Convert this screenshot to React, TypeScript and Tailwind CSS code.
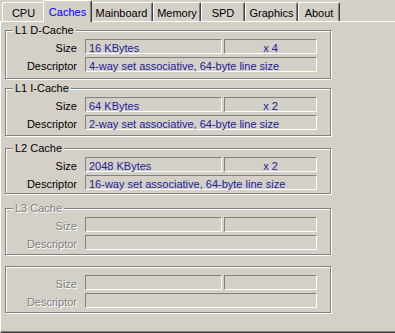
import React from "react";

const tabs = [
  { name: "CPU", cls: "w-[43px]" },
  { name: "Caches", cls: "w-[49px]", active: true },
  { name: "Mainboard", cls: "w-[63px]" },
  { name: "Memory", cls: "w-[48px]" },
  { name: "SPD", cls: "w-[44px]" },
  { name: "Graphics", cls: "w-[53px]" },
  { name: "About", cls: "w-[42px]" },
];

type G = {
  label?: string;
  disabled?: boolean;
  size?: string;
  count?: string;
  desc?: string;
  cls: string;
};

const groups: G[] = [
  { label: "L1 D-Cache", size: "16 KBytes", count: "x 4", desc: "4-way set associative, 64-byte line size", cls: "mt-[8px] h-[49px]" },
  { label: "L1 I-Cache", size: "64 KBytes", count: "x 2", desc: "2-way set associative, 64-byte line size", cls: "mt-[9px] h-[48px]" },
  { label: "L2 Cache", size: "2048 KBytes", count: "x 2", desc: "16-way set associative, 64-byte line size", cls: "mt-[12px] h-[46px]" },
  { label: "L3 Cache", disabled: true, cls: "mt-[14px] h-[47px]" },
  { disabled: true, cls: "mt-[11px] h-[47px]" },
];

function Field({ w, center, children }: { w: string; center?: boolean; children?: React.ReactNode }) {
  return (
    <div
      className={
        "h-[15px] border-t border-l border-t-[#808080] border-l-[#808080] border-b border-r border-b-white border-r-white text-[#20209a] leading-[16px] whitespace-nowrap " +
        w +
        (center ? " text-center" : " pl-[3px]")
      }
    >
      {children}
    </div>
  );
}

function Label({ text, disabled }: { text: string; disabled?: boolean }) {
  return (
    <div
      className={
        "w-[71px] mr-[8px] pt-[1px] text-right leading-[16px] h-[15px] " +
        (disabled ? "text-[#808080] [text-shadow:1px_1px_0_#ffffff]" : "text-black")
      }
    >
      {text}
    </div>
  );
}

function Group({ g }: { g: G }) {
  return (
    <div
      className={
        "relative w-[326px] border border-[#808080] shadow-[inset_1px_1px_0_#ffffff,1px_1px_0_#ffffff] pt-[8px] " +
        g.cls
      }
    >
      {g.label && (
        <div
          className={
            "absolute left-[7px] top-[-7px] px-[2px] bg-[#d4d0c8] leading-[13px] " +
            (g.disabled ? "text-[#808080] [text-shadow:1px_1px_0_#ffffff]" : "text-black")
          }
        >
          {g.label}
        </div>
      )}
      <div className="flex flex-col gap-[3px]">
        <div className="flex items-start">
          <Label text="Size" disabled={g.disabled} />
          <Field w="w-[137px]">{g.size}</Field>
          <div className="w-[2px]" />
          <Field w="w-[93px]" center>
            {g.count}
          </Field>
        </div>
        <div className="flex items-start">
          <Label text="Descriptor" disabled={g.disabled} />
          <Field w="w-[232px]">{g.desc}</Field>
        </div>
      </div>
    </div>
  );
}

export default function App() {
  return (
    <div
      className="w-[395px] h-[333px] overflow-hidden bg-[#d4d0c8] text-[11px]"
      style={{ fontFamily: '"Liberation Sans", Arial, sans-serif' }}
    >
      <div className="flex items-end h-[21px] pl-[2px]">
        {tabs.map((t) =>
          t.active ? (
            <div
              key={t.name}
              className={
                "relative z-10 -mx-[2px] -mb-[1px] h-[22px] bg-[#d4d0c8] border-l border-t border-white border-r border-r-[#404040] shadow-[inset_-1px_0_0_#808080] rounded-tl-[2px] rounded-tr-[2px] text-center pt-[5px] leading-[13px] text-[#0000ff] " +
                t.cls
              }
            >
              {t.name}
            </div>
          ) : (
            <div
              key={t.name}
              className={
                "h-[19px] border-l border-t border-white border-r border-r-[#404040] shadow-[inset_-1px_0_0_#808080] rounded-tl-[2px] rounded-tr-[2px] text-center pt-[4px] leading-[13px] text-black " +
                t.cls
              }
            >
              {t.name}
            </div>
          )
        )}
      </div>
      <div className="w-[400px] h-[312px] border-t border-l border-white border-b border-b-[#404040] shadow-[inset_0_-1px_0_#808080] pl-[4px]">
        {groups.map((g, i) => (
          <Group key={i} g={g} />
        ))}
      </div>
    </div>
  );
}
